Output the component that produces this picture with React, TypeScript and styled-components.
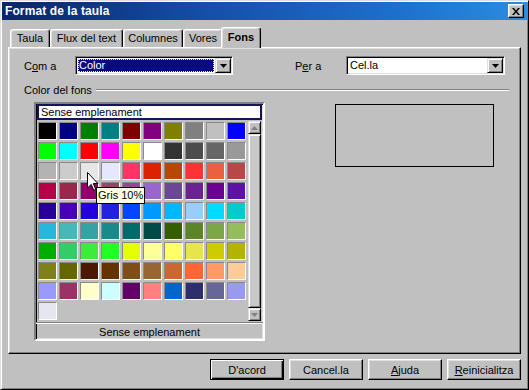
import React from "react";
import styled, { createGlobalStyle } from "styled-components";

const GlobalStyle = createGlobalStyle`
  html, body { margin: 0; padding: 0; background: #c0c0c0; }
  body { font-family: "Liberation Sans", Arial, sans-serif; font-size: 11px; color: #000; }
  * { box-sizing: border-box; }
`;

const Window = styled.div`
  width: 529px;
  height: 390px;
  background: #c0c0c0;
  border: 1px solid;
  border-color: #dfdfdf #000 #000 #dfdfdf;
  box-shadow: inset 1px 1px 0 #fff, inset -1px -1px 0 #808080;
  padding: 1px;
  display: flex;
  flex-direction: column;
`;

const TitleBar = styled.div`
  height: 18px;
  display: flex;
  align-items: center;
  justify-content: space-between;
  padding: 0 3px 0 3px;
  background: linear-gradient(90deg, #0a246a 0%, #1550aa 40%, #1c70cc 75%, #2c8ce0 100%);
`;

const Title = styled.span`
  color: #fff;
  font-weight: bold;
  font-size: 12px;
  letter-spacing: 0.1px;
`;

const CloseButton = styled.div`
  width: 16px;
  height: 14px;
  background: #c0c0c0;
  border: 1px solid;
  border-color: #fff #000 #000 #fff;
  box-shadow: inset -1px -1px 0 #808080, inset 1px 1px 0 #dfdfdf;
  display: flex;
  align-items: center;
  justify-content: center;
`;

const Body = styled.div`
  flex: 1;
  display: flex;
  flex-direction: column;
  padding: 7px 6px 0 6px;
`;

const TabStrip = styled.div`
  display: flex;
  align-items: flex-end;
  height: 20px;
  padding-left: 2px;
  position: relative;
  z-index: 1;
`;

const Tab = styled.div<{ $w: number; $active?: boolean }>`
  width: ${(p) => p.$w}px;
  height: ${(p) => (p.$active ? 21 : 18)}px;
  margin: 0 ${(p) => (p.$active ? "-2px" : "0")} ${(p) => (p.$active ? "-1px" : "0")}
    ${(p) => (p.$active ? "-2px" : "0")};
  background: #c0c0c0;
  border-top: 1px solid #fff;
  border-left: 1px solid #fff;
  border-right: 1px solid #000;
  border-radius: 3px 3px 0 0;
  box-shadow: inset -1px 0 0 #808080, inset 1px 1px 0 #dfdfdf;
  display: flex;
  justify-content: center;
  padding-top: ${(p) => (p.$active ? 3 : 2)}px;
  font-weight: ${(p) => (p.$active ? "bold" : "normal")};
  font-size: 11px;
  white-space: nowrap;
`;

const Panel = styled.div`
  height: 307px;
  border: 1px solid;
  border-color: #fff #000 #000 #fff;
  box-shadow: inset -1px -1px 0 #808080, inset 1px 1px 0 #dfdfdf;
  padding: 8px 0 0 14px;
  display: flex;
  flex-direction: column;
`;

const ComboRow = styled.div`
  display: grid;
  grid-template-columns: 52px 158px 61px 52px 159px;
  align-items: center;
  height: 19px;
`;

const Label = styled.span`
  padding-left: 1px;
`;

const Combo = styled.div`
  height: 19px;
  display: flex;
  background: #fff;
  border: 1px solid;
  border-color: #808080 #fff #fff #808080;
  box-shadow: inset 1px 1px 0 #000, inset -1px -1px 0 #dfdfdf;
  padding: 1px;
`;

const ComboValue = styled.div<{ $selected?: boolean }>`
  flex: 1;
  margin: ${(p) => (p.$selected ? "1px" : "0")};
  padding-left: ${(p) => (p.$selected ? 1 : 2)}px;
  line-height: ${(p) => (p.$selected ? 13 : 15)}px;
  font-size: 11px;
  background: ${(p) => (p.$selected ? "#0a0a80" : "transparent")};
  color: ${(p) => (p.$selected ? "#fff" : "#000")};
  outline: ${(p) => (p.$selected ? "1px dotted #f0f0a0" : "none")};
  outline-offset: -1px;
`;

const DropButton = styled.div`
  width: 16px;
  height: 15px;
  background: #c0c0c0;
  border: 1px solid;
  border-color: #dfdfdf #000 #000 #dfdfdf;
  box-shadow: inset 1px 1px 0 #fff, inset -1px -1px 0 #808080;
  display: flex;
  align-items: center;
  justify-content: center;
`;

const GroupHeader = styled.div`
  display: flex;
  align-items: center;
  margin-top: 8px;
  height: 14px;
  width: 486px;
`;

const GroupLine = styled.div`
  flex: 1;
  height: 2px;
  margin-left: 4px;
  border-top: 1px solid #808080;
  border-bottom: 1px solid #fff;
`;

const Lower = styled.div`
  display: flex;
  align-items: flex-start;
  margin-top: 5px;
  padding-left: 11px;
`;

const PaletteFrame = styled.div`
  position: relative;
  width: 231px;
  height: 239px;
  border: 2px solid;
  border-color: #808080 #fff #fff #808080;
  box-shadow: inset 1px 1px 0 #000, inset -1px -1px 0 #dfdfdf;
  display: flex;
  flex-direction: column;
`;

const NameField = styled.div`
  height: 16px;
  margin: 0 1px;
  background: #fff;
  border: 2px solid #14145a;
  font-size: 11px;
  line-height: 12px;
  padding-left: 2px;
  white-space: nowrap;
  overflow: hidden;
`;

const SwatchArea = styled.div`
  display: flex;
  height: 200px;
  margin-top: 1px;
`;

const SwatchGrid = styled.div`
  display: grid;
  grid-template-columns: repeat(10, 19px);
  grid-auto-rows: 18px;
  gap: 2px;
  padding: 1px 0 0 2px;
  width: 212px;
  align-content: start;
`;

const Swatch = styled.div<{ $c: string }>`
  background: ${(p) => p.$c};
  border: 1px solid;
  border-color: #8a8a8a #fff #fff #8a8a8a;
`;

const ScrollBar = styled.div`
  width: 13px;
  display: flex;
  flex-direction: column;
`;

const ScrollButton = styled.div`
  width: 13px;
  height: 13px;
  background: #c0c0c0;
  border: 1px solid;
  border-color: #dfdfdf #000 #000 #dfdfdf;
  box-shadow: inset 1px 1px 0 #fff, inset -1px -1px 0 #808080;
  display: flex;
  align-items: center;
  justify-content: center;
`;

const ScrollThumb = styled.div`
  flex: 1;
  background: #c8c8c8;
  border: 1px solid;
  border-color: #dfdfdf #000 #000 #dfdfdf;
  box-shadow: inset 1px 1px 0 #fff, inset -1px -1px 0 #808080;
`;

const PaletteFooter = styled.div`
  flex: 1;
  border-top: 1px solid #808080;
  box-shadow: inset 0 1px 0 #fff;
  margin-top: 1px;
  display: flex;
  align-items: center;
  justify-content: center;
  font-size: 11px;
  padding-top: 1px;
`;

const Tooltip = styled.div`
  position: absolute;
  left: 60px;
  top: 83px;
  height: 17px;
  padding: 0 1px;
  background: #ffffe1;
  border: 1px solid #000;
  font-size: 11px;
  line-height: 15px;
  white-space: nowrap;
  z-index: 2;
`;

const Cursor = styled.svg`
  position: absolute;
  left: 51px;
  top: 68px;
  z-index: 3;
`;

const Preview = styled.div`
  width: 159px;
  height: 63px;
  margin-left: 70px;
  margin-top: 2px;
  border: 1px solid #000;
`;

const ButtonRow = styled.div`
  display: flex;
  justify-content: flex-end;
  gap: 5px;
  margin-top: 5px;
`;

const Button = styled.div<{ $default?: boolean }>`
  width: 74px;
  height: 21px;
  background: #c0c0c0;
  border: 1px solid;
  border-color: ${(p) => (p.$default ? "#000" : "#fff #000 #000 #fff")};
  box-shadow: ${(p) =>
    p.$default
      ? "inset 1px 1px 0 #fff, inset -1px -1px 0 #000, inset -2px -2px 0 #808080"
      : "inset -1px -1px 0 #808080, inset 1px 1px 0 #dfdfdf"};
  display: flex;
  align-items: center;
  justify-content: center;
  font-size: 11px;
`;

const palette: string[][] = [
  ["#000000", "#000080", "#008000", "#008080", "#800000", "#800080", "#808000", "#808080", "#c0c0c0", "#0000ff"],
  ["#00ff00", "#00ffff", "#ff0000", "#ff00ff", "#ffff00", "#ffffff", "#333333", "#4c4c4c", "#666666", "#999999"],
  ["#b3b3b3", "#cccccc", "#e6e6e6", "#e6e6ff", "#ff3366", "#dc2300", "#b84700", "#ff3333", "#eb613d", "#b84747"],
  ["#b80047", "#99284c", "#94006b", "#94476b", "#944794", "#9966cc", "#6b4794", "#6b2394", "#6b0094", "#5e11a6"],
  ["#280099", "#4700b8", "#2300dc", "#2323dc", "#0047ff", "#0099ff", "#00b8ff", "#99ccff", "#00dcff", "#00cccc"],
  ["#23b8dc", "#47b8b8", "#33a3a3", "#198a8a", "#006b6b", "#004a4a", "#355e00", "#5c8526", "#7da647", "#94bd5e"],
  ["#00ae00", "#33cc66", "#3deb3d", "#23ff23", "#e6ff00", "#ffff99", "#ffff66", "#e6e64c", "#cccc00", "#b3b300"],
  ["#808019", "#666600", "#4c1900", "#663300", "#804d1a", "#996633", "#cc6633", "#ff6633", "#ff9966", "#ffcc99"],
  ["#9999ff", "#993366", "#ffffcc", "#ccffff", "#660066", "#ff8080", "#0066cc", "#2e2e6e", "#666699", "#9999ee"],
  ["#e6e6f0"],
];

const Arrow = ({ up, disabled }: { up?: boolean; disabled?: boolean }) => (
  <svg width="7" height="4" viewBox="0 0 7 4">
    <path
      d={up ? "M3.5 0 L7 4 L0 4 Z" : "M0 0 L7 0 L3.5 4 Z"}
      fill={disabled ? "#808080" : "#000"}
    />
  </svg>
);

export default function App() {
  return (
    <>
      <GlobalStyle />
      <Window>
        <TitleBar>
          <Title>Format de la taula</Title>
          <CloseButton>
            <svg width="8" height="7" viewBox="0 0 8 7">
              <path d="M0 0 L2 0 L4 2.5 L6 0 L8 0 L5 3.5 L8 7 L6 7 L4 4.5 L2 7 L0 7 L3 3.5 Z" fill="#000" />
            </svg>
          </CloseButton>
        </TitleBar>
        <Body>
          <TabStrip>
            <Tab $w={40}>Taula</Tab>
            <Tab $w={73}>Flux del text</Tab>
            <Tab $w={60}>Columnes</Tab>
            <Tab $w={40}>Vores</Tab>
            <Tab $w={40} $active>
              Fons
            </Tab>
          </TabStrip>
          <Panel>
            <ComboRow>
              <Label>
                C<u>o</u>m a
              </Label>
              <Combo>
                <ComboValue $selected>Color</ComboValue>
                <DropButton>
                  <Arrow />
                </DropButton>
              </Combo>
              <span />
              <Label>
                P<u>e</u>r a
              </Label>
              <Combo>
                <ComboValue>Cel.la</ComboValue>
                <DropButton>
                  <Arrow />
                </DropButton>
              </Combo>
            </ComboRow>
            <GroupHeader>
              <Label>Color del fons</Label>
              <GroupLine />
            </GroupHeader>
            <Lower>
              <PaletteFrame>
                <NameField>Sense emplenament</NameField>
                <SwatchArea>
                  <SwatchGrid>
                    {palette.flatMap((row, r) =>
                      row.map((c, i) => <Swatch key={`${r}-${i}`} $c={c} />)
                    )}
                  </SwatchGrid>
                  <ScrollBar>
                    <ScrollButton>
                      <Arrow up disabled />
                    </ScrollButton>
                    <ScrollThumb />
                    <ScrollButton>
                      <Arrow disabled />
                    </ScrollButton>
                  </ScrollBar>
                </SwatchArea>
                <PaletteFooter>Sense emplenament</PaletteFooter>
                <Cursor width="12" height="19" viewBox="0 0 12 19">
                  <path
                    d="M0.5 0.5 L0.5 16 L4.2 12.4 L6.8 18.3 L8.8 17.4 L6.3 11.6 L11 11.6 Z"
                    fill="#fff"
                    stroke="#000"
                    strokeWidth="1"
                  />
                </Cursor>
                <Tooltip>Gris 10%</Tooltip>
              </PaletteFrame>
              <Preview />
            </Lower>
          </Panel>
          <ButtonRow>
            <Button $default>D'acord</Button>
            <Button>Cancel.la</Button>
            <Button>
              <u>A</u>juda
            </Button>
            <Button>
              <u>R</u>einicialitza
            </Button>
          </ButtonRow>
        </Body>
      </Window>
    </>
  );
}
